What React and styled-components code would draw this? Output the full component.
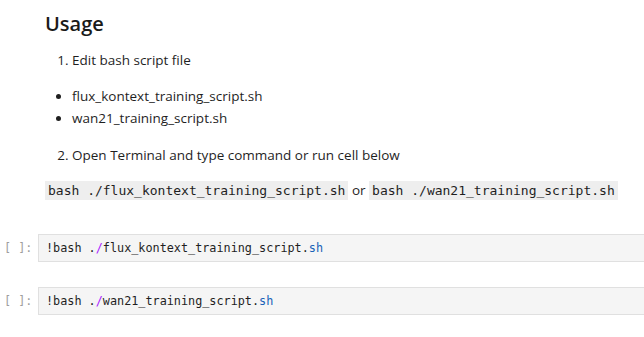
import React from 'react'
import styled, { createGlobalStyle } from 'styled-components'

const GlobalStyle = createGlobalStyle`
  body {
    margin: 0;
    background: #fff;
    font-family: "Open Sans", "Liberation Sans", sans-serif;
    color: #1f1f1f;
  }
`

const Notebook = styled.div`
  width: 644px;
  overflow: hidden;
`

const Cell = styled.div`
  display: grid;
  grid-template-columns: 38px 1fr;
  margin-top: ${props => props.top || 0}px;
`

const Prompt = styled.div`
  font-family: "DejaVu Sans Mono", monospace;
  font-size: 11.8px;
  color: #9e9e9e;
  line-height: 28px;
  padding-left: 4px;
  white-space: pre;
`

const Markdown = styled.div`
  padding: 12px 0 0 7px;
  font-size: 13.5px;
`

const Heading = styled.h2`
  margin: 0;
  font-size: 20px;
  font-weight: 600;
  line-height: 24px;
  color: #1a1a1a;
`

const Ordered = styled.ol`
  margin: ${props => props.top}px 0 0;
  padding-left: 27px;
  line-height: 22px;
`

const Bullets = styled.ul`
  margin: ${props => props.top}px 0 0;
  padding-left: 27px;
  line-height: 22px;
`

const Para = styled.p`
  margin: 12px 0 0;
  line-height: 24px;
`

const Code = styled.code`
  font-family: "DejaVu Sans Mono", monospace;
  font-size: 13px;
  background: #eeeeee;
  padding: 2px 3px;
  color: #1f1f1f;
`

const Input = styled.div`
  background: #f5f5f5;
  border: 1px solid #e0e0e0;
  border-right: none;
  height: 26px;
  display: flex;
  align-items: center;
  padding-left: 7px;
  font-family: "DejaVu Sans Mono", monospace;
  font-size: 11.8px;
  color: #1f1f1f;
  white-space: pre;
`

const Op = styled.span`
  color: #aa22ff;
`

const Prop = styled.span`
  color: #1a62b8;
`

const CodeCell = ({ top, name }) => (
  <Cell top={top}>
    <Prompt>[ ]:</Prompt>
    <Input>
      !bash .<Op>/</Op>{name}.<Prop>sh</Prop>
    </Input>
  </Cell>
)

export default function App() {
  return (
    <>
      <GlobalStyle />
      <Notebook>
        <Cell>
          <div />
          <Markdown>
            <Heading>Usage</Heading>
            <Ordered top={13}>
              <li>Edit bash script file</li>
            </Ordered>
            <Bullets top={14}>
              <li>flux_kontext_training_script.sh</li>
              <li>wan21_training_script.sh</li>
            </Bullets>
            <Ordered top={15} start={2}>
              <li>Open Terminal and type command or run cell below</li>
            </Ordered>
            <Para>
              <Code>bash ./flux_kontext_training_script.sh</Code> or{' '}
              <Code>bash ./wan21_training_script.sh</Code>
            </Para>
          </Markdown>
        </Cell>
        <CodeCell top={31} name="flux_kontext_training_script" />
        <CodeCell top={25} name="wan21_training_script" />
      </Notebook>
    </>
  )
}
